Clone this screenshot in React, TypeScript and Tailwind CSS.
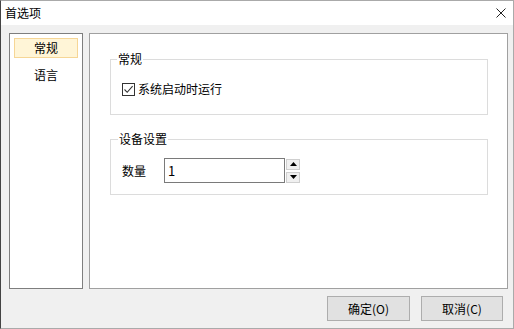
import React from "react";

const font = { fontFamily: '"Noto Sans CJK SC", "Noto Sans", sans-serif' };

function SpinButton({ up }: { up: boolean }) {
    return (
        <div className="w-[14px] h-[11px] bg-[#f0f0f0] border border-[#cfcfcf] flex items-center justify-center">
            <svg width="7" height="4" viewBox="0 0 7 4">
                {up ? <polygon points="0,4 7,4 3.5,0" fill="#000" /> : <polygon points="0,0 7,0 3.5,4" fill="#000" />}
            </svg>
        </div>
    );
}

export default function App() {
    return (
        <div
            className="w-[514px] h-[329px] flex flex-col border-t border-b border-r border-[#aaaaaa] border-l border-l-[#444444] text-[12px] text-black overflow-hidden"
            style={font}
        >
            {/* title bar */}
            <div className="h-[24px] shrink-0 bg-white flex items-center justify-between pl-[4px] pr-[7px]">
                <span className="leading-[16px]">首选项</span>
                <svg width="10" height="10" viewBox="0 0 10 10">
                    <path d="M0.5 0.5 L9.5 9.5 M9.5 0.5 L0.5 9.5" stroke="#222" strokeWidth="1" />
                </svg>
            </div>

            <div className="flex-1 bg-[#f0f0f0] flex flex-col pt-[8px] pl-[8px] pr-[5px]">
                <div className="h-[256px] flex gap-[6px]">
                    {/* side list */}
                    <div className="w-[74px] bg-white border border-[#7e7e7e] flex flex-col gap-[7px] px-[4px] pt-[4px]">
                        <div className="h-[20px] bg-[#fff5d7] border border-[#f6d696] flex items-center justify-center leading-none">
                            常规
                        </div>
                        <div className="h-[20px] flex items-center justify-center leading-none">语言</div>
                    </div>

                    {/* content */}
                    <div className="flex-1 bg-white border border-[#a0a0a0] flex flex-col pl-[20px] pt-[17px]">
                        <fieldset className="w-[378px] h-[64px] border border-[#dcdcdc] m-0 p-0">
                            <legend className="ml-[6px] px-[1px] leading-[16px]">常规</legend>
                            <div className="flex items-center mt-[14px] ml-[11px] gap-[3px]">
                                <div className="w-[13px] h-[13px] border border-[#333333] bg-white flex items-center justify-center">
                                    <svg width="11" height="11" viewBox="0 0 11 11">
                                        <path d="M1.5 5.5 L4.2 8.3 L9.6 2.2" fill="none" stroke="#333" strokeWidth="1.1" />
                                    </svg>
                                </div>
                                <span className="leading-[16px]">系统启动时运行</span>
                            </div>
                        </fieldset>

                        <fieldset className="w-[378px] h-[64px] border border-[#dcdcdc] m-0 p-0 mt-[16px]">
                            <legend className="ml-[7px] px-[1px] leading-[16px]">设备设置</legend>
                            <div className="flex items-center mt-[11px] ml-[11px]">
                                <span className="w-[42px] leading-[16px]">数量</span>
                                <div className="w-[121px] h-[25px] border border-[#7a7a7a] bg-white flex items-center pl-[3px] text-[13px]">
                                    1
                                </div>
                                <div className="flex flex-col gap-[2px] ml-[1px]">
                                    <SpinButton up />
                                    <SpinButton up={false} />
                                </div>
                            </div>
                        </fieldset>
                    </div>
                </div>

                <div className="flex justify-end gap-[11px] mt-[7px] mr-[5px]">
                    <button className="w-[83px] h-[25px] bg-[#e1e1e1] border border-[#adadad] leading-none">确定(O)</button>
                    <button className="w-[82px] h-[25px] bg-[#e1e1e1] border border-[#adadad] leading-none">取消(C)</button>
                </div>
            </div>
        </div>
    );
}
